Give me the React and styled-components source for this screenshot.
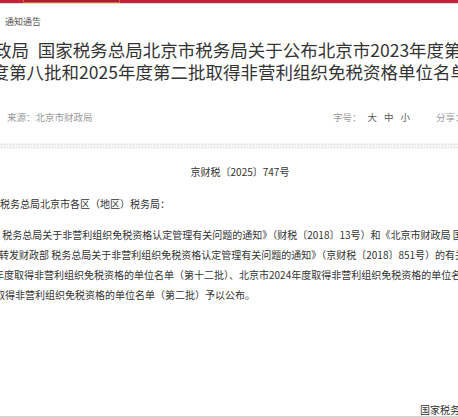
import React from "react";
import styled, { createGlobalStyle } from "styled-components";

const GlobalStyle = createGlobalStyle`
  html, body {
    margin: 0;
    padding: 0;
    background: #ffffff;
    overflow: hidden;
  }
  body {
    font-family: "Noto Sans CJK SC", "Noto Sans", sans-serif;
    color: #333333;
  }
`;

const Page = styled.div`
  width: 458px;
  height: 418px;
  overflow: hidden;
  display: flex;
  flex-direction: column;
`;

const TopBar = styled.div`
  height: 3px;
  background: #c42338;
  border-bottom: 1px solid #f3d2d6;
  display: flex;
  flex-shrink: 0;
`;

const ActiveTab = styled.div`
  margin-left: 23px;
  width: 97px;
  height: 3px;
  box-sizing: border-box;
  background: #b01c2f;
  border: 1px solid #cf6a3a;
  border-top: none;
`;

const Breadcrumb = styled.div`
  margin-top: 12px;
  padding-left: 5px;
  font-size: 9px;
  line-height: 12px;
  color: #555555;
`;

const TitleBlock = styled.h1`
  margin: 11px 0 0 -194px;
  width: 900px;
  flex-shrink: 0;
  font-size: 17.5px;
  line-height: 22px;
  font-weight: 400;
  color: #333333;
  text-align: center;
`;

const TitleLine = styled.div`
  white-space: nowrap;
`;

const MetaRow = styled.div`
  margin-top: 27px;
  padding-left: 7px;
  display: grid;
  grid-template-columns: 326px 103px auto;
  font-size: 9.5px;
  line-height: 14px;
  color: #999999;
  white-space: nowrap;
`;

const FontSizes = styled.div`
  display: flex;
  gap: 7px;
`;

const SizeLabel = styled.span`
  margin-right: -1px;
`;

const SizeOption = styled.span`
  color: #555555;
`;

const Separator = styled.div`
  margin-top: 19px;
  height: 6px;
  flex-shrink: 0;
  background-color: #f4f4f4;
  background-image: radial-gradient(#dcdcdc 0.8px, transparent 0.9px);
  background-size: 3px 3px;
`;

const DocNumber = styled.div`
  margin-top: 16px;
  padding-left: 22px;
  font-size: 10px;
  line-height: 14px;
  text-align: center;
  color: #333333;
`;

const Paragraph = styled.div`
  margin-top: ${(p) => p.$gap}px;
  font-size: 10px;
  line-height: 20px;
  color: #333333;
`;

const Line = styled.div`
  white-space: nowrap;
  margin-left: ${(p) => p.$shift || 0}px;
`;

const Signature = styled.div`
  margin-top: 99px;
  padding-left: 420px;
  font-size: 10px;
  line-height: 12px;
  color: #333333;
  white-space: nowrap;
`;

const FooterRule = styled.div`
  height: 2px;
  flex-shrink: 0;
  background: #d9d3ce;
`;

export default function App() {
  return (
    <>
      <GlobalStyle />
      <Page>
        <TopBar>
          <ActiveTab />
        </TopBar>
        <Breadcrumb>通知通告</Breadcrumb>
        <TitleBlock>
          <TitleLine>
            北京市财政局&ensp;国家税务总局北京市税务局关于公布北京市2023年度第十二批、2024年
          </TitleLine>
          <TitleLine>度第八批和2025年度第二批取得非营利组织免税资格单位名单的通知</TitleLine>
        </TitleBlock>
        <MetaRow>
          <span>来源：北京市财政局</span>
          <FontSizes>
            <SizeLabel>字号：</SizeLabel>
            <SizeOption>大</SizeOption>
            <SizeOption>中</SizeOption>
            <SizeOption>小</SizeOption>
          </FontSizes>
          <span>分享：</span>
        </MetaRow>
        <Separator />
        <DocNumber>京财税〔2025〕747号</DocNumber>
        <Paragraph $gap={15}>
          <Line $shift={0}>税务总局北京市各区（地区）税务局：</Line>
        </Paragraph>
        <Paragraph $gap={11}>
          <Line $shift={-10}>
            部 税务总局关于非营利组织免税资格认定管理有关问题的通知》（财税〔2018〕13号）和《北京市财政局 国家税务总局
          </Line>
          <Line $shift={-1}>
            转发财政部 税务总局关于非营利组织免税资格认定管理有关问题的通知》（京财税〔2018〕851号）的有关规定，
          </Line>
          <Line $shift={-6}>
            年度取得非营利组织免税资格的单位名单（第十二批）、北京市2024年度取得非营利组织免税资格的单位名单（第八批）
          </Line>
          <Line $shift={-5}>取得非营利组织免税资格的单位名单（第二批）予以公布。</Line>
        </Paragraph>
        <Signature>国家税务总局北京市税务局</Signature>
        <FooterRule />
      </Page>
    </>
  );
}
